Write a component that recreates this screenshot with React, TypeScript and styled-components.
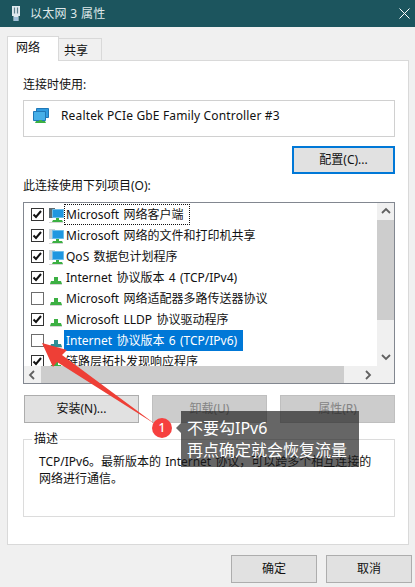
import styled, { createGlobalStyle } from 'styled-components'

const GlobalStyle = createGlobalStyle`
  html, body {
    margin: 0;
    padding: 0;
    background: #f0f0f0;
  }
  * {
    box-sizing: border-box;
  }
`

const Dialog = styled.div`
  position: relative;
  display: flex;
  flex-direction: column;
  width: 415px;
  height: 587px;
  overflow: hidden;
  background: #f0f0f0;
  color: #111;
  font-family: 'Noto Sans', 'Noto Sans CJK SC', sans-serif;
  font-size: 12px;
  line-height: 16px;
`

const TitleBar = styled.div`
  display: flex;
  align-items: center;
  flex: none;
  height: 27px;
  padding: 0 5px 0 11px;
  background: #1c555e;
  color: #dfe8e9;
  font-size: 12px;
`

const TitleText = styled.span`
  flex: 1;
  margin-left: 9px;
  letter-spacing: 0.3px;
`

const TabStrip = styled.div`
  display: flex;
  align-items: flex-end;
  flex: none;
  height: 34px;
  padding: 0 0 0 7px;
  margin-bottom: -1px;
`

const Tab = styled.div<{ $active?: boolean }>`
  position: relative;
  z-index: ${p => (p.$active ? 1 : 0)};
  width: ${p => (p.$active ? '52px' : '44px')};
  height: ${p => (p.$active ? '25px' : '23px')};
  margin-left: ${p => (p.$active ? '0' : '-1px')};
  padding: ${p => (p.$active ? '3px 0 0 8px' : '4px 0 0 5px')};
  background: ${p => (p.$active ? '#fff' : '#f0f0f0')};
  border: 1px solid #d9d9d9;
  border-bottom: ${p => (p.$active ? 'none' : '1px solid #d9d9d9')};
`

const Panel = styled.div`
  display: flex;
  flex-direction: column;
  flex: none;
  height: 485px;
  margin: 0 6px 0 7px;
  padding: 16px 13px 0 15px;
  background: #fff;
  border: 1px solid #d9d9d9;
`

const AdapterBox = styled.div`
  display: flex;
  align-items: center;
  height: 37px;
  margin-top: 7px;
  padding: 0 0 5px 9px;
  border: 1px solid #d0d0d0;
`

const AdapterName = styled.span`
  margin-left: 12px;
  letter-spacing: 0.15px;
`

const Button = styled.div<{ $disabled?: boolean; $focused?: boolean }>`
  display: flex;
  align-items: center;
  justify-content: center;
  width: 115px;
  height: 28px;
  background: ${p => (p.$disabled ? '#cccccc' : '#e1e1e1')};
  border: ${p => (p.$focused ? '2px solid #0078d7' : '1px solid #adadad')};
  border-color: ${p => (p.$disabled ? '#bfbfbf' : p.$focused ? '#0078d7' : '#adadad')};
  color: ${p => (p.$disabled ? '#838383' : '#111')};
`

const ConfigRow = styled.div`
  display: flex;
  justify-content: flex-end;
  margin-top: 9px;
`

const ConfigButton = styled(Button)`
  width: 103px;
`

const ListLabel = styled.div`
  margin-top: 4px;
`

const ListBox = styled.div`
  display: grid;
  grid-template-columns: 1fr 17px;
  grid-template-rows: 1fr 17px;
  height: 182px;
  margin-top: 8px;
  border: 1px solid #828790;
`

const Rows = styled.div`
  overflow: hidden;
  padding-top: 1px;
`

const Row = styled.div`
  display: flex;
  align-items: center;
  height: 21px;
  padding-left: 7px;
  white-space: nowrap;
`

const CheckBox = styled.div<{ $checked?: boolean }>`
  display: flex;
  align-items: center;
  justify-content: center;
  flex: none;
  width: 13px;
  height: 13px;
  background: #fff;
  border: 1px solid ${p => (p.$checked ? '#333' : '#6d6d6d')};
`

const IconSlot = styled.div`
  display: flex;
  flex: none;
  justify-content: center;
  width: 16px;
  height: 16px;
  margin-left: 4px;
`

const RowText = styled.span<{ $selected?: boolean; $focused?: boolean }>`
  display: block;
  height: 21px;
  padding: 2px 6px 0 2px;
  line-height: 17px;
  word-spacing: 1.2px;
  background: ${p => (p.$selected ? '#0078d7' : 'transparent')};
  color: ${p => (p.$selected ? '#fff' : '#111')};
  outline: ${p => (p.$focused ? '1px dotted #111' : 'none')};
  outline-offset: -1px;
`

const VScroll = styled.div`
  display: flex;
  flex-direction: column;
  background: #f0f0f0;
`

const HScroll = styled.div`
  display: flex;
  background: #f0f0f0;
`

const Corner = styled.div`
  background: #f0f0f0;
`

const ArrowCell = styled.div`
  display: flex;
  align-items: center;
  justify-content: center;
  flex: none;
  width: 17px;
  height: 17px;
  color: #606060;
`

const VThumb = styled.div`
  flex: none;
  height: 100px;
  background: #cdcdcd;
`

const HThumb = styled.div`
  flex: none;
  width: 303px;
  background: #cdcdcd;
`

const Spring = styled.div`
  flex: 1;
`

const ActionRow = styled.div`
  display: flex;
  justify-content: space-between;
  margin: 11px 0 0 1px;
`

const Group = styled.fieldset`
  height: 86px;
  margin: 8px 0 0;
  padding: 0 10px 0 15px;
  border: 1px solid #dcdcdc;
`

const Legend = styled.legend`
  margin-left: -7px;
  padding: 0 2px;
`

const Description = styled.div`
  margin-top: 6px;
  line-height: 17px;
  word-spacing: 1px;
`

const Footer = styled.div`
  display: flex;
  justify-content: flex-end;
  gap: 9px;
  margin-top: 10px;
  padding-right: 3px;
`

const FooterButton = styled(Button)`
  width: 86px;
`

const Pointer = styled.svg`
  position: absolute;
  left: 0;
  top: 0;
  pointer-events: none;
`

const Badge = styled.div`
  position: absolute;
  left: 152px;
  top: 418px;
  display: flex;
  align-items: center;
  justify-content: center;
  width: 20px;
  height: 20px;
  border-radius: 50%;
  background: #f6403f;
  color: #fff;
  font-size: 12px;
  font-weight: 500;
`

const Tip = styled.div`
  position: absolute;
  left: 181px;
  top: 411px;
  width: 178px;
  height: 56px;
  padding: 6px 0 0 6px;
  background: rgba(27, 27, 27, 0.67);
  color: #fff;
  font-size: 16px;
  line-height: 22px;

  &::before {
    content: '';
    position: absolute;
    left: -5px;
    top: 12px;
    border-style: solid;
    border-width: 5px 5px 5px 0;
    border-color: transparent rgba(27, 27, 27, 0.67) transparent transparent;
  }
`

const UsbIcon = () => (
  <svg width="10" height="17" viewBox="0 0 10 17">
    <path d="M1 1h8v10H7.5v5h-5v-5H1z" fill="#dfe9ee" />
    <path d="M3.5 2.5v6M6.5 2.5v6" stroke="#5d7f8c" strokeWidth="1.2" />
    <path d="M3 12h4v4H3z" fill="#9fc0da" />
  </svg>
)

const Connector = ({ color = '#3cb043' }: { color?: string }) => (
  <svg width="16" height="16" viewBox="0 0 16 16">
    <path d="M6 7h4v4H6z" fill={color} />
    <path d="M3 11h10l1 3H2z" fill={color} />
    <path d="M2 14h12v1H2z" fill="#d6d6d6" />
  </svg>
)

const Monitor = ({ dark }: { dark?: boolean }) => (
  <svg width="16" height="16" viewBox="0 0 16 16">
    <path d="M1 1h6v10H1z" fill={dark ? '#5e6b70' : '#c9d3d8'} />
    <path d="M4.5 2.5h11v8h-11z" fill="#1f97e0" stroke="#6cbdea" />
    <path d="M8 11h3v2H8z" fill="#3cb043" />
    <path d="M5 13h9l1 2H4z" fill="#3cb043" />
    <path d="M1 15h14v1H1z" fill="#d6d6d6" />
  </svg>
)

const AdapterIcon = () => (
  <svg width="16" height="16" viewBox="0 0 16 16">
    <path d="M3.5 0.5h12v9h-12z" fill="#2f9be0" stroke="#1f78b8" />
    <path d="M0.5 3.5h12v9h-12z" fill="#46afe8" stroke="#1f78b8" />
    <path d="M6 12h3v1H6z" fill="#3cb043" />
    <path d="M3 13h9l1 2H2z" fill="#3cb043" />
  </svg>
)

const Check = () => (
  <svg width="11" height="11" viewBox="0 0 11 11">
    <path d="M1.5 5.5l2.5 2.5 5-6" fill="none" stroke="#111" strokeWidth="2" />
  </svg>
)

const Chevron = ({ dir }: { dir: 'up' | 'down' | 'left' | 'right' }) => {
  const d = {
    up: 'M1 6l4-4 4 4',
    down: 'M1 2l4 4 4-4',
    left: 'M6 1L2 5l4 4',
    right: 'M2 1l4 4-4 4',
  }[dir]
  return (
    <svg width="10" height="10" viewBox="0 0 10 10">
      <path d={d} fill="none" stroke="currentColor" strokeWidth="1.8" />
    </svg>
  )
}

const items = [
  { text: 'Microsoft 网络客户端', checked: true, icon: 'dark', focused: true },
  { text: 'Microsoft 网络的文件和打印机共享', checked: true, icon: 'pc' },
  { text: 'QoS 数据包计划程序', checked: true, icon: 'pc' },
  { text: 'Internet 协议版本 4 (TCP/IPv4)', checked: true, icon: 'net' },
  { text: 'Microsoft 网络适配器多路传送器协议', checked: false, icon: 'net' },
  { text: 'Microsoft LLDP 协议驱动程序', checked: true, icon: 'net' },
  { text: 'Internet 协议版本 6 (TCP/IPv6)', checked: false, icon: 'net', selected: true },
  { text: '链路层拓扑发现响应程序', checked: true, icon: 'net' },
]

const App = () => (
  <Dialog>
    <GlobalStyle />
    <TitleBar>
      <UsbIcon />
      <TitleText>以太网 3 属性</TitleText>
      <svg width="11" height="11" viewBox="0 0 11 11">
        <path d="M0.5 0.5l10 10M10.5 0.5l-10 10" stroke="#fff" strokeWidth="1" />
      </svg>
    </TitleBar>

    <TabStrip>
      <Tab $active>网络</Tab>
      <Tab>共享</Tab>
    </TabStrip>

    <Panel>
      <div>连接时使用:</div>
      <AdapterBox>
        <AdapterIcon />
        <AdapterName>Realtek PCIe GbE Family Controller #3</AdapterName>
      </AdapterBox>
      <ConfigRow>
        <ConfigButton $focused>配置(C)...</ConfigButton>
      </ConfigRow>
      <ListLabel>此连接使用下列项目(O):</ListLabel>

      <ListBox>
        <Rows>
          {items.map(item => (
            <Row key={item.text}>
              <CheckBox $checked={item.checked}>{item.checked && <Check />}</CheckBox>
              <IconSlot>
                {item.icon === 'net' ? (
                  <Connector color={item.selected ? '#2f8f96' : undefined} />
                ) : (
                  <Monitor dark={item.icon === 'dark'} />
                )}
              </IconSlot>
              <RowText $selected={item.selected} $focused={item.focused}>
                {item.text}
              </RowText>
            </Row>
          ))}
        </Rows>
        <VScroll>
          <ArrowCell>
            <Chevron dir="up" />
          </ArrowCell>
          <VThumb />
          <Spring />
          <ArrowCell>
            <Chevron dir="down" />
          </ArrowCell>
        </VScroll>
        <HScroll>
          <ArrowCell>
            <Chevron dir="left" />
          </ArrowCell>
          <HThumb />
          <Spring />
          <ArrowCell>
            <Chevron dir="right" />
          </ArrowCell>
        </HScroll>
        <Corner />
      </ListBox>

      <ActionRow>
        <Button>安装(N)...</Button>
        <Button $disabled>卸载(U)</Button>
        <Button $disabled>属性(R)</Button>
      </ActionRow>

      <Group>
        <Legend>描述</Legend>
        <Description>
          {'TCP/IPv6。最新版本的 Internet 协议\uFF0C可以跨多个相互连接的'}
          <br />
          网络进行通信。
        </Description>
      </Group>
    </Panel>

    <Footer>
      <FooterButton>确定</FooterButton>
      <FooterButton>取消</FooterButton>
    </Footer>

    <Pointer width="415" height="587" viewBox="0 0 415 587">
      <path
        d="M42 343L67 350L62 355L155 424L57 362L53 367Z"
        fill="#ee3f36"
      />
    </Pointer>
    <Badge>1</Badge>
    <Tip>
      不要勾IPv6
      <br />
      再点确定就会恢复流量
    </Tip>
  </Dialog>
)

export default App
